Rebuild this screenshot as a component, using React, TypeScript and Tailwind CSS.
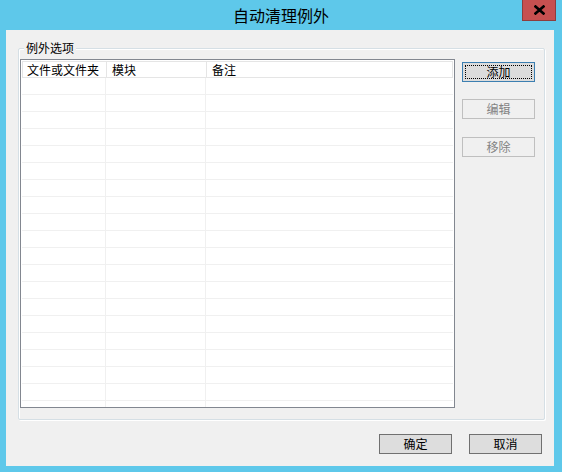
import React from 'react';

const font = { fontFamily: '"Noto Sans CJK SC", "Noto Sans", sans-serif' };

const rows = Array.from({ length: 20 }, (_, i) => i);

function SideButton({ label, active }: { label: string; active?: boolean }) {
  if (active) {
    return (
      <button className="h-[20px] w-[73px] border border-[#3c7fb1] bg-[#dcdcdc] p-[2px] text-[12px] leading-none text-black">
        <span className="flex h-full w-full items-center justify-center border border-dotted border-black">{label}</span>
      </button>
    );
  }
  return (
    <button className="flex h-[20px] w-[73px] items-center justify-center border border-[#bfbfbf] bg-[#f0f0f0] text-[12px] leading-none text-[#838383]">
      {label}
    </button>
  );
}

function FooterButton({ label }: { label: string }) {
  return (
    <button className="flex h-[20px] w-[73px] items-center justify-center border border-[#707070] bg-[#dddddd] text-[12px] leading-none text-black">
      {label}
    </button>
  );
}

export default function App() {
  return (
    <div className="flex h-[472px] w-[562px] flex-col bg-[#5ec8ea]" style={font}>
      {/* title bar */}
      <div className="relative flex h-[30px] shrink-0 items-center justify-center">
        <span className="text-[16px] leading-none text-black">自动清理例外</span>
        <div className="absolute right-[6px] top-0 flex h-[21px] w-[34px] items-center justify-center border border-t-0 border-[#8e3d3d] bg-[#c75050]">
          <svg width="11" height="10" viewBox="0 0 11 10">
            <path d="M1.5 1.5 L9.5 8.5 M9.5 1.5 L1.5 8.5" stroke="#000" strokeWidth="2.6" strokeLinecap="square" />
          </svg>
        </div>
      </div>

      {/* client area */}
      <div className="ml-[6px] mr-[8px] mb-[6px] flex flex-1 flex-col bg-[#f0f0f0]">
        <div className="ml-[12px] mt-[18px] flex h-[372px] w-[527px] flex-col rounded-[2px] border border-[#d5dfe5] shadow-[inset_1px_1px_0_#fff,1px_1px_0_#fff]">
          <span className="-mt-[8px] ml-[5px] w-fit bg-[#f0f0f0] px-[2px] text-[12px] leading-[14px] text-black">例外选项</span>

          <div className="mt-[4px] flex">
            {/* list */}
            <div className="ml-[1px] h-[349px] w-[435px] overflow-hidden border border-[#828790] bg-white p-[1px] text-[12px] text-black">
              <div className="flex h-[17px] border-t border-l border-[#e5e5e5]">
                <div className="flex w-[84px] items-center border-r border-b border-[#e5e5e5] pl-[4px] leading-none">文件或文件夹</div>
                <div className="flex w-[100px] items-center border-r border-b border-[#e5e5e5] pl-[5px] leading-none">模块</div>
                <div className="flex flex-1 items-center border-r border-b border-[#e5e5e5] pl-[5px] leading-none">备注</div>
              </div>
              {rows.map((r) => (
                <div key={r} className="flex h-[17px] border-b border-[#f0f0f0]">
                  <div className="w-[84px] border-r border-[#f0f0f0]" />
                  <div className="w-[100px] border-r border-[#f0f0f0]" />
                  <div className="flex-1" />
                </div>
              ))}
            </div>

            {/* side buttons */}
            <div className="ml-[7px] mt-[3px] flex flex-col">
              <SideButton label="添加" active />
              <div className="mt-[17px]">
                <SideButton label="编辑" />
              </div>
              <div className="mt-[18px]">
                <SideButton label="移除" />
              </div>
            </div>
          </div>
        </div>

        <div className="mr-[12px] mt-[14px] flex justify-end gap-[17px]">
          <FooterButton label="确定" />
          <FooterButton label="取消" />
        </div>
      </div>
    </div>
  );
}
